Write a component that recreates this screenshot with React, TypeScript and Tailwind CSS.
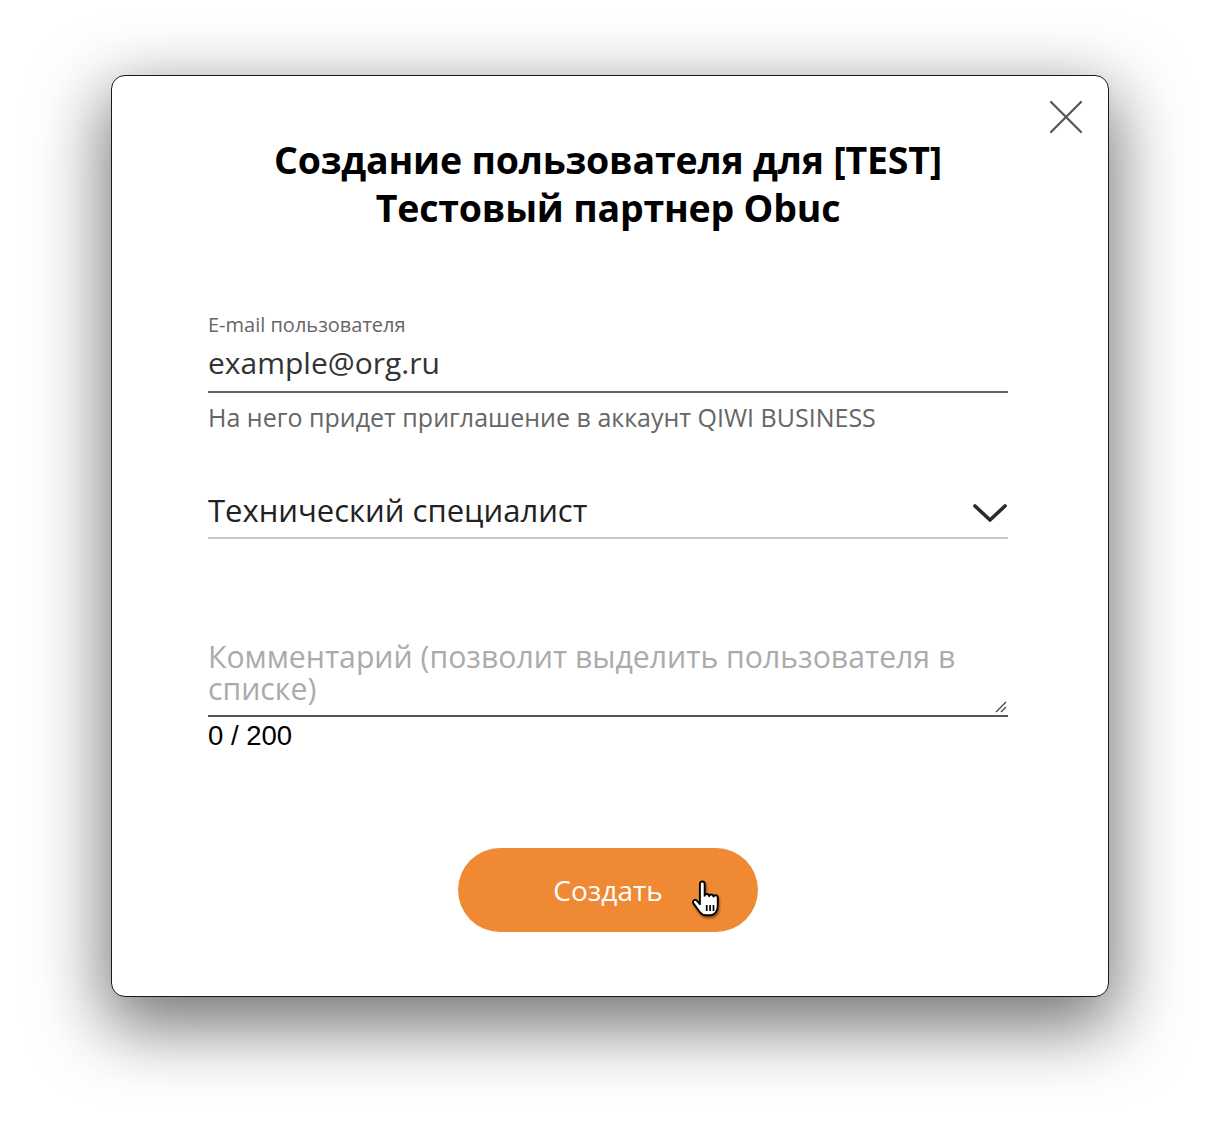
import * as React from "react";

function CloseIcon() {
  return (
    <svg width="34" height="34" viewBox="0 0 34 34" fill="none">
      <path d="M2 2 L32 32 M32 2 L2 32" stroke="#555" strokeWidth="2.2" strokeLinecap="round" />
    </svg>
  );
}

function Chevron() {
  return (
    <svg width="34" height="20" viewBox="0 0 34 20" fill="none">
      <path d="M2 3 L17 17 L32 3" stroke="#2b2b2b" strokeWidth="3.6" strokeLinecap="round" strokeLinejoin="round" />
    </svg>
  );
}

function HandCursor() {
  return (
    <svg width="34" height="40" viewBox="0 0 20 23" className="drop-shadow-[1px_2px_1px_rgba(0,0,0,0.45)]">
      <path
        d="M7 2C7 1.2 7.6 0.6 8.4 0.6C9.2 0.6 9.8 1.2 9.8 2V9C10 8.3 10.5 8 11.1 8C11.8 8 12.3 8.5 12.4 9.2C12.6 8.6 13.1 8.3 13.7 8.3C14.4 8.3 14.9 8.8 15 9.5C15.2 9 15.7 8.7 16.2 8.7C17 8.7 17.5 9.3 17.5 10V15C17.5 18 15.8 20.5 13 20.5H10.5C8.8 20.5 7.8 19.7 6.8 18.4L3.2 13.5C2.7 12.8 2.9 12 3.5 11.6C4.1 11.2 4.9 11.4 5.3 12L7 14Z"
        fill="#fff"
        stroke="#000"
        strokeWidth="1.1"
        strokeLinejoin="round"
      />
      <path d="M11 14.5V18 M13 14.5V18 M15 14.5V18" stroke="#000" strokeWidth="1" />
    </svg>
  );
}

export default function App() {
  return (
    <div className="w-[1220px] h-[1144px] bg-white pl-[111px] pt-[75px] font-['Open_Sans',sans-serif]">
      <div className="relative w-[998px] h-[922px] bg-white border border-[#1a1a1a] rounded-[14px] shadow-[0_24px_70px_6px_rgba(0,0,0,0.55)] flex flex-col">
        <button className="absolute right-[25px] top-[24px]">
          <CloseIcon />
        </button>

        <h1 className="mt-[60px] self-center -translate-x-[2px] text-center text-[37.5px] leading-[48px] font-bold text-black tracking-[-0.2px]">
          Создание пользователя для [TEST]
          <br />
          Тестовый партнер Obuc
        </h1>

        <div className="w-[800px] ml-[96px] mt-[81px] flex flex-col">
          <label className="text-[20px] leading-[24px] text-[#666]">E-mail пользователя</label>
          <div className="text-[30px] leading-[38px] text-[#333] mt-[7px]">example@org.ru</div>
          <div className="h-[2px] bg-[#666] mt-[9px]" />
          <div className="text-[25px] leading-[30px] text-[#666] mt-[9px]">
            На него придет приглашение в аккаунт QIWI BUSINESS
          </div>

          <div className="flex items-center justify-between mt-[59px]">
            <span className="text-[31px] leading-[38px] text-[#222]">Технический специалист</span>
            <span className="translate-y-[3px] -translate-x-[1px]">
              <Chevron />
            </span>
          </div>
          <div className="h-[2px] bg-[#c8c8c8] mt-[8px]" />

          <div className="relative mt-[102px]">
            <div className="text-[30.2px] leading-[32px] text-[#ababab] pr-[40px]">
              Комментарий (позволит выделить пользователя в списке)
            </div>
            <svg className="absolute right-[1px] bottom-[-8px]" width="14" height="14" viewBox="0 0 14 14" fill="none">
              <path d="M13 3 L3 13 M13 8 L8 13" stroke="#444" strokeWidth="1.3" />
            </svg>
          </div>
          <div className="h-[2px] bg-[#555] mt-[10px]" />
          <div className="font-['Liberation_Sans',sans-serif] text-[27.5px] leading-[32px] text-black mt-[3px]">
            0 / 200
          </div>
        </div>

        <button className="relative ml-[346px] mt-[96px] w-[300px] h-[84px] rounded-full bg-[#ef8934] text-white text-[28px] flex items-center justify-center">
          Создать
          <span className="absolute left-[230px] top-[32px]">
            <HandCursor />
          </span>
        </button>
      </div>
    </div>
  );
}
